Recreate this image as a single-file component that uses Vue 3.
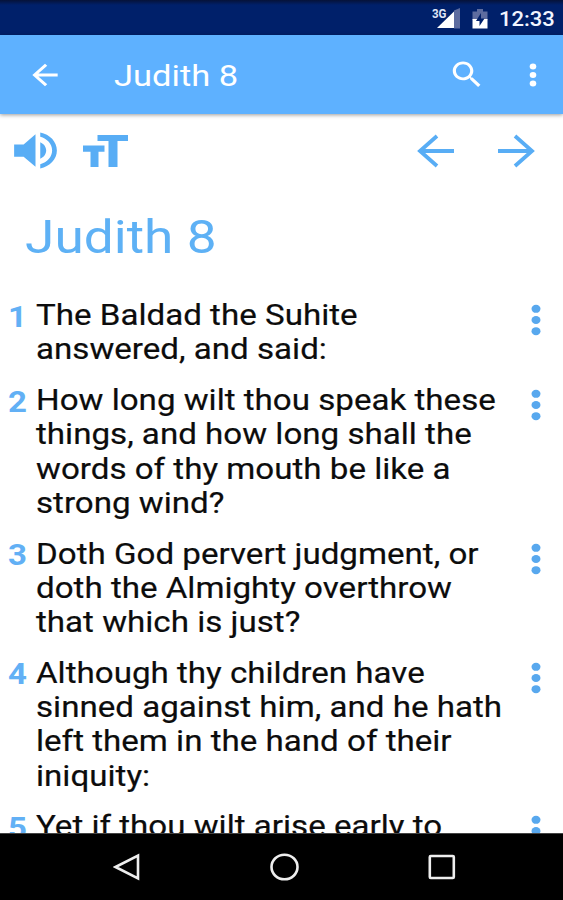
<template>
  <div class="reader">
    <!-- System status bar -->
    <header class="status-bar">
      <svg class="status-bar__signal" viewBox="0 0 30 22" aria-hidden="true">
        <path d="M22 21.500V3.500l6-2.500v20.500z" fill="#5d6c9f" />
        <path d="M5 21L22 4.500V21z" fill="#fff" />
        <text x="0" y="10.500" class="status-bar__network" textLength="14.500" lengthAdjust="spacingAndGlyphs">3G</text>
      </svg>
      <svg class="status-bar__battery" viewBox="0 0 16 20" aria-hidden="true">
        <path d="M1 2.500h4V0h6v2.500h4.500V11H.500V2.500z" fill="#5d6c9f" />
        <path d="M.500 10h15v9.500H.500z" fill="#fff" />
        <path d="M9 4L4 12h3.500v5L12.500 9.500H9z" fill="#00206a" />
      </svg>
      <span class="status-bar__time"><span class="wide">12:33</span></span>
    </header>

    <!-- App bar with the chapter name -->
    <nav class="app-bar">
      <button class="icon-button" type="button" aria-label="Back">
        <svg width="38" height="34" viewBox="0 0 24 24" preserveAspectRatio="none">
          <path d="M20 11H7.830l5.590-5.590L12 4l-8 8 8 8 1.410-1.410L7.830 13H20v-2z" />
        </svg>
      </button>
      <span class="app-bar__title"><span class="wide">{{ chapter }}</span></span>
      <button class="icon-button" type="button" aria-label="Search">
        <svg width="38" height="35" viewBox="0 0 24 24" preserveAspectRatio="none">
          <path d="M15.500 14h-.790l-.280-.270C15.410 12.590 16 11.110 16 9.500 16 5.910 13.090 3 9.500 3S3 5.910 3 9.500 5.910 16 9.500 16c1.610 0 3.090-.590 4.230-1.570l.270.280v.790l5 4.990L20.490 19l-4.990-5zm-6 0C7.010 14 5 11.990 5 9.500S7.010 5 9.500 5 14 7.010 14 9.500 11.990 14 9.500 14z" />
        </svg>
      </button>
      <button class="icon-button app-bar__more" type="button" aria-label="More">
        <svg width="8" height="24" viewBox="0 0 8 24">
          <ellipse v-for="y in [3.5, 12, 20.5]" :key="y" cx="4" :cy="y" rx="3.300" ry="3" />
        </svg>
      </button>
    </nav>

    <main class="content">
      <!-- Audio, text size and chapter navigation -->
      <div class="tools">
        <button class="icon-button" type="button" aria-label="Listen">
          <svg width="57" height="49" viewBox="0 0 24 24" preserveAspectRatio="none">
            <path d="M3 9v6h4l5 5V4L7 9H3zm13.500 3c0-1.770-1.020-3.290-2.500-4.030v8.050c1.480-.730 2.500-2.250 2.500-4.020zM14 3.230v2.060c2.890.860 5 3.540 5 6.710s-2.110 5.850-5 6.710v2.060c4.010-.910 7-4.490 7-8.770s-2.990-7.860-7-8.770z" />
          </svg>
        </button>
        <button class="icon-button tools__size" type="button" aria-label="Text size">
          <svg width="46" height="32" viewBox="0 0 46 32">
            <path d="M14.500 0h30.500v6h-10.500V32h-9V6h-11zM0 10.500h21.500v6.300h-6V32h-8V16.800H0z" />
          </svg>
        </button>
        <button class="icon-button tools__previous" type="button" aria-label="Previous chapter">
          <svg class="arrow" width="38" height="34" viewBox="0 0 38 34">
            <path d="M37 17H3M20 2L3 17l17 15" />
          </svg>
        </button>
        <button class="icon-button tools__next" type="button" aria-label="Next chapter">
          <svg class="arrow" width="38" height="34" viewBox="0 0 38 34">
            <path d="M1 17h34M18 2l17 15-17 15" />
          </svg>
        </button>
      </div>

      <h1 class="title"><span class="wide">{{ chapter }}</span></h1>

      <ol class="verses">
        <li v-for="verse in verses" :key="verse.number" class="verse">
          <span class="verse__number"><span class="wide">{{ verse.number }}</span></span>
          <p class="verse__text">
            <span v-for="line in verse.lines" :key="line" class="wide verse__line">{{ line }}</span>
          </p>
          <button class="icon-button verse__menu" type="button" aria-label="Verse options">
            <svg width="10" height="34" viewBox="0 0 10 34">
              <ellipse v-for="y in [5.8, 17, 28.2]" :key="y" cx="5" :cy="y" rx="4.500" ry="4" />
            </svg>
          </button>
        </li>
      </ol>
    </main>

    <!-- System navigation -->
    <footer class="system-nav">
      <svg width="28" height="28" viewBox="0 0 28 28"><path d="M25 2.500v23L2.500 14z" /></svg>
      <svg width="30" height="28" viewBox="0 0 30 28"><ellipse cx="14.500" cy="14" rx="13" ry="12.300" /></svg>
      <svg width="28" height="28" viewBox="0 0 28 28"><rect x="1.800" y="3" width="24" height="22" rx="1" /></svg>
    </footer>
  </div>
</template>

<script setup>
const chapter = 'Judith 8'

// Verse text, broken where the reader column wraps
const verses = [
  { number: 1, lines: ['The Baldad the Suhite', 'answered, and said:'] },
  {
    number: 2,
    lines: [
      'How long wilt thou speak these',
      'things, and how long shall the',
      'words of thy mouth be like a',
      'strong wind?',
    ],
  },
  {
    number: 3,
    lines: [
      'Doth God pervert judgment, or',
      'doth the Almighty overthrow',
      'that which is just?',
    ],
  },
  {
    number: 4,
    lines: [
      'Although thy children have',
      'sinned against him, and he hath',
      'left them in the hand of their',
      'iniquity:',
    ],
  },
  { number: 5, lines: ['Yet if thou wilt arise early to'] },
]
</script>

<style>
body {
  margin: 0;
}
</style>

<style scoped>
.reader {
  display: flex;
  flex-direction: column;
  width: 563px;
  height: 900px;
  overflow: hidden;
  background: #fff;
  font-family: Roboto, "Liberation Sans", sans-serif;
  color: #0c0c0c;
}

.wide {
  display: inline-block;
  white-space: nowrap;
  transform: scaleX(1.14);
  transform-origin: left center;
}

.icon-button {
  display: flex;
  flex: none;
  padding: 0;
  border: 0;
  background: none;
  color: inherit;
}

.icon-button svg {
  display: block;
  fill: currentColor;
}

.status-bar {
  display: flex;
  flex: none;
  align-items: flex-start;
  box-sizing: border-box;
  height: 35px;
  padding: 7px 0 0 432px;
  background: linear-gradient(#061238, #00206a 5px);
  color: #f2f5ff;
}

.status-bar__signal {
  width: 30px;
  height: 22px;
}

.status-bar__network {
  fill: #dfe4f5;
  font-size: 12px;
  font-weight: 700;
}

.status-bar__battery {
  width: 16px;
  height: 20px;
  margin: 2px 0 0 10px;
}

.status-bar__time {
  margin-left: 11px;
  font-size: 20px;
  font-weight: 500;
  line-height: 24px;
}

.status-bar__time .wide {
  transform: scaleX(1.1);
}

.app-bar {
  display: flex;
  flex: none;
  align-items: center;
  box-sizing: border-box;
  height: 79px;
  padding: 0 26px;
  background: #5eb1ff;
  box-shadow: 0 1px 4px rgba(0, 0, 0, 0.4);
  color: #fff;
  z-index: 1;
}

.app-bar__title {
  flex: 1;
  margin-left: 50px;
  padding-top: 2px;
  font-size: 30px;
}

.app-bar__title .wide {
  transform: scaleX(1.15);
}

.app-bar__more {
  margin-left: 43px;
}

.content {
  flex: 1;
  min-height: 0;
  overflow: hidden;
}

.tools {
  display: flex;
  align-items: center;
  height: 73px;
  padding: 0 28px 0 7px;
  color: #58adf5;
}

.tools__size {
  margin-left: 19px;
}

.tools__previous {
  margin-left: auto;
}

.tools__next {
  margin-left: 42px;
}

.icon-button .arrow {
  fill: none;
  stroke: currentColor;
  stroke-width: 3.8;
}

.title {
  margin: 23px 0 0 25px;
  color: #5eb1f5;
  font-size: 46.5px;
  font-weight: 400;
  line-height: 54px;
}

.title .wide {
  transform: scaleX(1.145);
}

.verses {
  margin: 34px 0 0;
  padding: 0;
  list-style: none;
}

.verse {
  display: flex;
  align-items: flex-start;
  margin-bottom: 16.7px;
  padding: 0 22px 0 8px;
}

.verse__number {
  flex: none;
  width: 28px;
  padding-top: 1.5px;
  color: #62b0f5;
  font-size: 30px;
  font-weight: 700;
  line-height: 34px;
}

.verse__number .wide {
  transform: scaleX(1.1);
}

.verse__text {
  flex: 1;
  min-width: 0;
  margin: 0;
  font-size: 29.2px;
  line-height: 34.2px;
  -webkit-text-stroke: 0.2px currentColor;
}

.verse__line {
  display: block;
  transform: scaleX(1.135);
}

.verse__menu {
  padding-top: 5px;
  color: #58a8ee;
}

.system-nav {
  display: flex;
  flex: none;
  align-items: center;
  justify-content: space-between;
  box-sizing: border-box;
  height: 67px;
  padding: 0 107px 0 113px;
  border-top: 1px solid #444;
  background: #000;
}

.system-nav svg {
  fill: none;
  stroke: #eee;
  stroke-width: 2.6;
}
</style>
